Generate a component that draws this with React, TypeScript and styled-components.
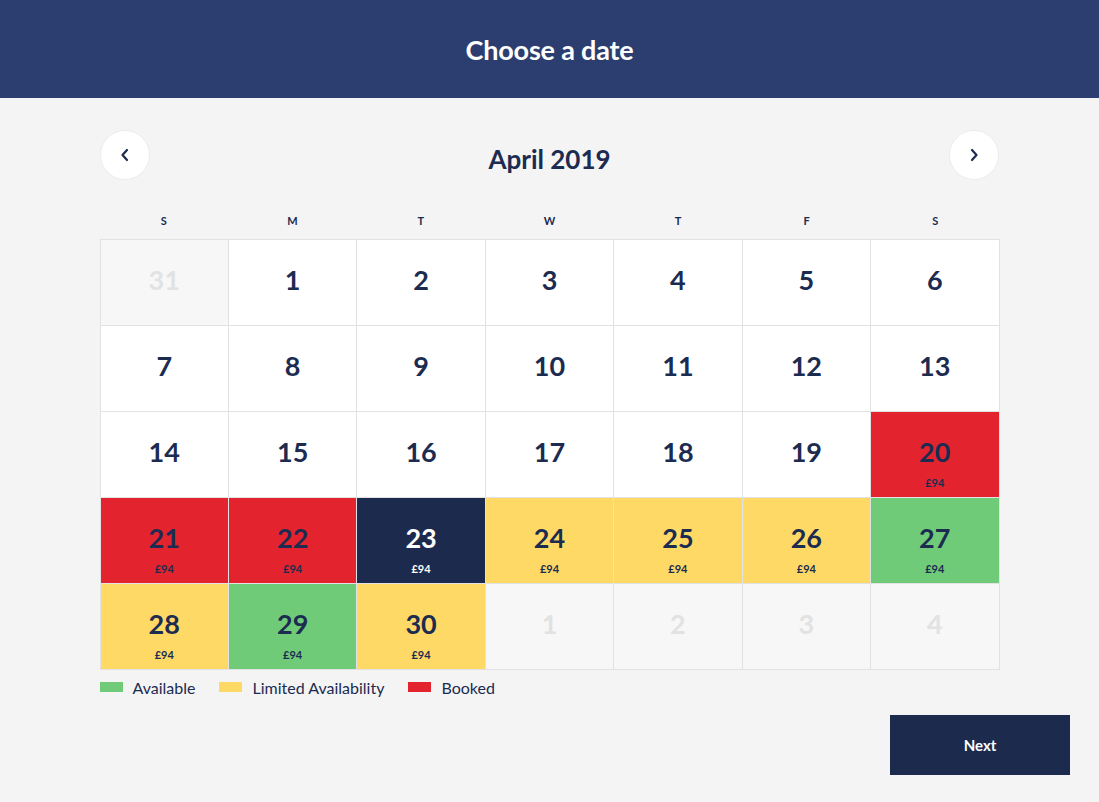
import React from "react";
import styled, { createGlobalStyle } from "styled-components";

const Global = createGlobalStyle`
  html, body { margin: 0; padding: 0; background: #f4f4f4; }
  body { font-family: "Lato", "Noto Sans", sans-serif; color: #1c2b50; }
  * { box-sizing: border-box; }
`;

const Page = styled.div`
  width: 1099px;
  min-height: 802px;
  background: #f4f4f4;
  display: flex;
  flex-direction: column;
`;

const Header = styled.header`
  height: 98px;
  background: #2c3e6f;
  display: flex;
  align-items: center;
  justify-content: center;
`;

const Title = styled.h1`
  margin: 0;
  color: #fff;
  font-size: 27px;
  font-weight: 700;
  letter-spacing: -0.2px;
`;

const Main = styled.main`
  width: 900px;
  margin: 0 auto;
  padding-top: 32px;
  display: flex;
  flex-direction: column;
`;

const MonthBar = styled.div`
  display: flex;
  align-items: center;
  justify-content: space-between;
  height: 50px;
`;

const NavButton = styled.button`
  width: 50px;
  height: 50px;
  border-radius: 50%;
  background: #fff;
  border: 1px solid #ececec;
  display: flex;
  align-items: center;
  justify-content: center;
  padding: 0;
  cursor: pointer;
`;

const MonthTitle = styled.h2`
  margin: 0;
  font-size: 26px;
  font-weight: 700;
  color: #1c2b50;
  padding-top: 8px;
`;

const Weekdays = styled.div`
  display: grid;
  grid-template-columns: repeat(7, 1fr);
  margin-top: 31px;
  height: 28px;
`;

const Weekday = styled.div`
  text-align: center;
  font-size: 11px;
  font-weight: 700;
  color: #1c2b50;
  line-height: 20px;
`;

const Grid = styled.div`
  display: grid;
  grid-template-columns: repeat(7, 1fr);
  grid-auto-rows: 85px;
  gap: 1px;
  background: #e2e2e2;
  border: 1px solid #e2e2e2;
`;

type Status = "none" | "out" | "booked" | "limited" | "available" | "selected";

const bg: Record<Status, string> = {
  none: "#ffffff",
  out: "#f7f7f7",
  booked: "#e3242f",
  limited: "#fed966",
  available: "#6fcb78",
  selected: "#1c2b4d",
};

const Cell = styled.div<{ $s: Status }>`
  background: ${(p) => bg[p.$s]};
  display: flex;
  flex-direction: column;
  align-items: center;
  justify-content: flex-start;
  padding-top: 25px;
  color: ${(p) => (p.$s === "out" ? "#e2e2e2" : p.$s === "selected" ? "#fff" : "#1c2b50")};
`;

const DayNum = styled.span`
  font-size: 27px;
  font-weight: 700;
  line-height: 30px;
`;

const Price = styled.span`
  font-size: 11px;
  font-weight: 700;
  line-height: 12px;
  margin-top: 10px;
`;

const Legend = styled.div`
  display: flex;
  align-items: center;
  gap: 24px;
  margin-top: 7px;
  height: 20px;
`;

const LegendItem = styled.div`
  display: flex;
  align-items: center;
  gap: 10px;
  font-size: 16px;
  color: #1c2b50;
`;

const Swatch = styled.span<{ $c: string }>`
  width: 23px;
  height: 10px;
  background: ${(p) => p.$c};
`;

const Footer = styled.div`
  width: 1099px;
  display: flex;
  justify-content: flex-end;
  padding-right: 29px;
  margin-top: 18px;
`;

const NextButton = styled.button`
  width: 180px;
  height: 60px;
  background: #1c2b4d;
  color: #fff;
  border: none;
  font-family: inherit;
  font-size: 15px;
  font-weight: 700;
  cursor: pointer;
`;

const Chevron = ({ dir }: { dir: "left" | "right" }) => (
  <svg width="12" height="14" viewBox="0 0 12 14" fill="none">
    <path
      d={dir === "left" ? "M8 2 L3.5 7 L8 12" : "M4 2 L8.5 7 L4 12"}
      stroke="#1c2b50"
      strokeWidth="2.2"
      strokeLinecap="round"
      strokeLinejoin="round"
    />
  </svg>
);

type Day = { n: number; s: Status; price?: boolean };

const days: Day[] = [
  { n: 31, s: "out" },
  ...Array.from({ length: 19 }, (_, i) => ({ n: i + 1, s: "none" as Status })),
  { n: 20, s: "booked", price: true },
  { n: 21, s: "booked", price: true },
  { n: 22, s: "booked", price: true },
  { n: 23, s: "selected", price: true },
  { n: 24, s: "limited", price: true },
  { n: 25, s: "limited", price: true },
  { n: 26, s: "limited", price: true },
  { n: 27, s: "available", price: true },
  { n: 28, s: "limited", price: true },
  { n: 29, s: "available", price: true },
  { n: 30, s: "limited", price: true },
  { n: 1, s: "out" },
  { n: 2, s: "out" },
  { n: 3, s: "out" },
  { n: 4, s: "out" },
];

export default function App() {
  return (
    <Page>
      <Global />
      <Header>
        <Title>Choose a date</Title>
      </Header>
      <Main>
        <MonthBar>
          <NavButton aria-label="Previous month">
            <Chevron dir="left" />
          </NavButton>
          <MonthTitle>April 2019</MonthTitle>
          <NavButton aria-label="Next month">
            <Chevron dir="right" />
          </NavButton>
        </MonthBar>
        <Weekdays>
          {["S", "M", "T", "W", "T", "F", "S"].map((d, i) => (
            <Weekday key={i}>{d}</Weekday>
          ))}
        </Weekdays>
        <Grid>
          {days.map((d, i) => (
            <Cell key={i} $s={d.s}>
              <DayNum>{d.n}</DayNum>
              {d.price && <Price>£94</Price>}
            </Cell>
          ))}
        </Grid>
        <Legend>
          <LegendItem>
            <Swatch $c="#6fcb78" />
            Available
          </LegendItem>
          <LegendItem>
            <Swatch $c="#fed966" />
            Limited Availability
          </LegendItem>
          <LegendItem>
            <Swatch $c="#e3242f" />
            Booked
          </LegendItem>
        </Legend>
      </Main>
      <Footer>
        <NextButton>Next</NextButton>
      </Footer>
    </Page>
  );
}
